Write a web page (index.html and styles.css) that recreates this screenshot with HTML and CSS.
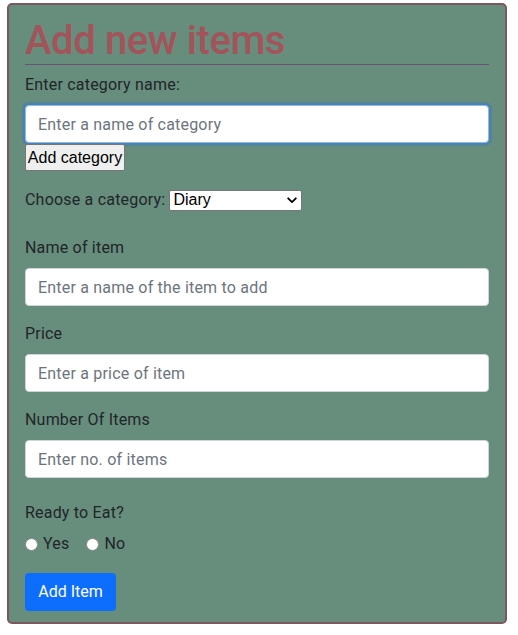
FILE: index.html
```html
<!DOCTYPE html>
<html>
<head>
<meta charset="utf-8">
<link rel="stylesheet" href="styles.css">
</head>
<body>
<div class="card">
  <h1 class="title">Add new items</h1>
  <hr class="rule">
  <label class="label">Enter category name:</label>
  <input class="field focused" type="text" placeholder="Enter a name of category">
  <button class="plain-btn">Add category</button>
  <div class="choose">
    <span>Choose a category:</span>
    <div class="select"><span>Diary</span>
      <svg width="10" height="7" viewBox="0 0 10 7"><path d="M1.2 1.3 L5 5.1 L8.8 1.3" fill="none" stroke="#000" stroke-width="1.8" stroke-linecap="round" stroke-linejoin="round"/></svg>
    </div>
  </div>
  <div class="group first">
    <label class="label">Name of item</label>
    <input class="field" type="text" placeholder="Enter a name of the item to add">
  </div>
  <div class="group">
    <label class="label">Price</label>
    <input class="field" type="text" placeholder="Enter a price of item">
  </div>
  <div class="group">
    <label class="label">Number Of Items</label>
    <input class="field" type="text" placeholder="Enter no. of items">
  </div>
  <div class="ready">
    <div class="label">Ready to Eat?</div>
    <div class="radios">
      <span class="radio-item"><span class="radio"></span>Yes</span>
      <span class="radio-item"><span class="radio"></span>No</span>
    </div>
  </div>
  <button class="primary-btn">Add Item</button>
</div>
</body>
</html>
```
FILE: styles.css
```css
html, body {
  margin: 0;
  padding: 0;
  background: #ffffff;
}
body {
  font-family: Roboto, "Liberation Sans", sans-serif;
  font-size: 16px;
  line-height: 24px;
  letter-spacing: 0.2px;
  color: #212529;
}
.card {
  box-sizing: border-box;
  margin: 3px 0 0 7px;
  width: 500px;
  height: 621px;
  border: 2px solid #7d5660;
  border-radius: 5px;
  background: #678d7c;
  padding: 0 16px;
  display: flex;
  flex-direction: column;
  align-items: flex-start;
}
.title {
  margin: 13px 0 0;
  font-size: 40px;
  line-height: 46px;
  font-weight: 500;
  letter-spacing: -0.4px;
  color: #a2545a;
}
.rule {
  align-self: stretch;
  margin: 0 0 8px;
  border: 0;
  border-top: 1px solid #6e4f7c;
  height: 0;
}
.label {
  display: block;
  margin-bottom: 8px;
  line-height: 24px;
}
.field {
  box-sizing: border-box;
  align-self: stretch;
  width: 100%;
  height: 38px;
  border: 1px solid #ced4da;
  border-radius: 4px;
  padding: 6px 12px;
  font: inherit;
  letter-spacing: 0.2px;
  color: #212529;
  background: #fff;
  outline: none;
  margin: 0;
}
.field::placeholder {
  color: #6c757d;
}
.field.focused {
  border-color: #86b7fe;
  box-shadow: 0 0 0 3px rgba(50, 120, 200, 0.45);
}
.plain-btn {
  box-sizing: border-box;
  margin-top: 1px;
  height: 27px;
  width: 100px;
  padding: 0;
  font-family: "Liberation Sans", Arial, sans-serif;
  font-size: 16px;
  letter-spacing: 0;
  color: #000;
  background: #efefef;
  border: 1px solid #767676;
  border-radius: 2px;
}
.choose {
  display: flex;
  align-items: center;
  gap: 4px;
  margin-top: 17px;
  height: 24px;
}
.select {
  box-sizing: border-box;
  width: 133px;
  height: 21px;
  border: 1px solid #767676;
  border-radius: 2px;
  background: #fff;
  display: flex;
  align-items: center;
  justify-content: space-between;
  padding: 0 4px 0 3px;
  font-family: "Liberation Sans", Arial, sans-serif;
  font-size: 16px;
  letter-spacing: 0;
  color: #000;
}
.group {
  align-self: stretch;
  margin-top: 16px;
}
.group.first {
  margin-top: 24px;
}
.ready {
  margin-top: 23px;
}
.ready .label {
  margin-bottom: 7px;
}
.radios {
  display: flex;
  gap: 17px;
  line-height: 24px;
}
.radio-item {
  display: flex;
  align-items: center;
}
.radio {
  box-sizing: border-box;
  width: 13px;
  height: 13px;
  border-radius: 50%;
  background: #fff;
  border: 1px solid #8a8a8a;
  margin: 0 5px 0 0;
}
.primary-btn {
  margin-top: 17px;
  box-sizing: border-box;
  height: 38px;
  width: 91px;
  padding: 0;
  border: 0;
  border-radius: 4px;
  background: #0d6efd;
  color: #fff;
  font: inherit;
}
```
